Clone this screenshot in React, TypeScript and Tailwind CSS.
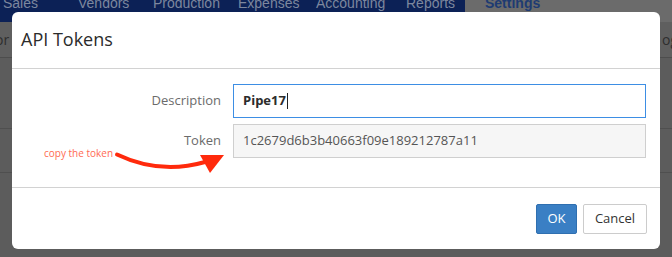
import React from 'react'

const navItems = [
  { label: 'Sales', w: 'w-[75px]' },
  { label: 'Vendors', w: 'w-[75px]' },
  { label: 'Production', w: 'w-[85px]' },
  { label: 'Expenses', w: 'w-[78px]' },
  { label: 'Accounting', w: 'w-[90px]' },
  { label: 'Reports', w: 'w-[56px]' },
]

export default function App() {
  return (
    <div
      className="relative w-[672px] h-[257px] overflow-hidden bg-[#5c5c5c]"
      style={{ fontFamily: '"Open Sans", "Liberation Sans", sans-serif' }}
    >
      {/* dimmed page behind the dialog */}
      <div className="flex h-[22px]" style={{ fontFamily: '"Liberation Sans", Arial, sans-serif' }}>
        <div className="flex w-[465px] bg-[#0c2156] pl-[3px]">
          {navItems.map(n => (
            <div key={n.label} className={`${n.w} shrink-0 text-[14px] leading-none -mt-[4px] text-[#7d879e]`}>
              {n.label}
            </div>
          ))}
        </div>
        <div className="flex-1 bg-[#6b6b6b] pl-[20px] text-[14px] font-bold leading-none -mt-[4px] text-[#1e3b72]">
          Settings
        </div>
      </div>
      <div className="h-[36px] bg-[#5f5f5f] border-b border-[#4d4d4d] flex items-center justify-between text-[14px] text-[#2e2e2e]">
        <span className="-ml-[10px]">tor</span>
        <span className="mr-[-6px]">og</span>
      </div>
      <div className="h-[71px] border-b border-[#4f4f4f]" />
      <div className="h-[44px] border-b border-[#4f4f4f]" />

      {/* dialog */}
      <div className="absolute left-[12px] top-[12px] w-[648px] h-[237px] bg-white rounded-[6px] flex flex-col">
        <div className="h-[57px] border-b border-[#d2d2d2] flex items-center pl-[9px]">
          <h2 className="text-[18px] text-[#2b2b2b] leading-none -mt-[2px]">API Tokens</h2>
        </div>
        <div className="relative flex-1 flex flex-col gap-[6px] pt-[15px] border-b border-[#d2d2d2]">
          <div className="flex items-center">
            <label className="w-[209px] text-right text-[13px] text-[#6b6b6b]">Description</label>
            <div className="ml-[12px] w-[413px] h-[34px] border border-[#3d8ee4] flex items-center px-[9px] text-[13px] font-bold text-[#2c2c2c]">
              Pipe17<span className="ml-[1px] w-px h-[16px] bg-[#222]" />
            </div>
          </div>
          <div className="flex items-center">
            <label className="w-[209px] text-right text-[13px] text-[#6b6b6b]">Token</label>
            <div className="ml-[12px] w-[413px] h-[34px] border border-[#cfcfcf] bg-[#f6f6f6] flex items-center px-[9px] text-[13px] text-[#555]">
              1c2679d6b3b40663f09e189212787a11
            </div>
          </div>
          <span className="absolute left-[32px] top-[79px] text-[10px] text-[#ff6a52] leading-none">copy the token</span>
          <svg className="absolute left-0 top-0" width="648" height="120" viewBox="12 72 648 120">
            <path d="M117 157.5 Q 160 178 205 165" fill="none" stroke="#ff2a0c" strokeWidth="4" strokeLinecap="round" />
            <polygon points="200,158 224,158 210,176" fill="#ff2a0c" />
          </svg>
        </div>
        <div className="h-[61px] flex items-center justify-end gap-[6px] pr-[13px]">
          <button className="w-[41px] h-[30px] rounded-[2px] bg-[#3a7fc4] border border-[#2f6fb0] text-white text-[13px]">OK</button>
          <button className="w-[64px] h-[30px] rounded-[2px] bg-white border border-[#cccccc] text-[#333] text-[13px]">Cancel</button>
        </div>
      </div>
    </div>
  )
}
